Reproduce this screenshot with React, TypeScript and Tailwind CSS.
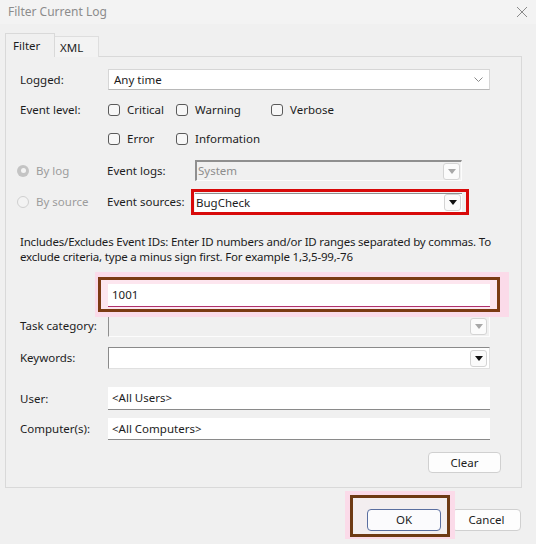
import React from "react";

const font = { fontFamily: '"Noto Sans", "Liberation Sans", sans-serif' };

function Check({ label, className = "" }: { label: string; className?: string }) {
  return (
    <div className={"flex items-center " + className}>
      <div className="w-[12px] h-[12px] rounded-[3px] border border-[#5a5a5a] bg-[#f7f7f7]" />
      <span className="ml-[7px]">{label}</span>
    </div>
  );
}

function Arrow({ color = "#000" }: { color?: string }) {
  return (
    <svg width="8" height="5" viewBox="0 0 8 5">
      <path d="M0 0 L8 0 L4 5 Z" fill={color} />
    </svg>
  );
}

function DropBtn({ dark }: { dark: boolean }) {
  return (
    <div className="w-[17px] h-[17px] rounded-[3px] border border-[#d4d4d4] bg-[#fbfbfb] flex items-center justify-center">
      <Arrow color={dark ? "#111" : "#a8a8a8"} />
    </div>
  );
}

export default function App() {
  return (
    <div
      className="w-[536px] h-[544px] bg-[#f0f0f0] text-[11.5px] text-[#1c1c1c] overflow-hidden relative"
      style={font}
    >
      {/* title bar */}
      <div className="h-[24px] flex items-center justify-between pl-[8px] pr-[7px] bg-[#f3f3f3]">
        <span className="text-[12px] text-[#8c8c8c]">Filter Current Log</span>
        <svg width="12" height="12" viewBox="0 0 12 12" className="mr-[1px]">
          <path d="M1 1 L11 11 M11 1 L1 11" stroke="#8a8a8a" strokeWidth="1" />
        </svg>
      </div>

      {/* tabs */}
      <div className="flex items-end ml-[5px] mt-[9px] h-[24px] relative z-10">
        <div className="w-[50px] h-[24px] border border-[#d9d9d9] border-b-0 bg-[#f0f0f0] pl-[7px] pt-[3px]">
          Filter
        </div>
        <div className="w-[44px] h-[21px] border border-[#dedede] border-l-0 border-b-0 bg-[#f3f3f3] pl-[5px] pt-[2px]">
          XML
        </div>
      </div>

      {/* panel */}
      <div className="ml-[5px] w-[517px] h-[432px] -mt-[1px] border border-[#d9d9d9] bg-[#f0f0f0] relative pl-[14px]">
        {/* Logged */}
        <div className="flex items-center mt-[12px] h-[21px]">
          <span className="w-[88px]">Logged:</span>
          <div className="w-[382px] h-[21px] bg-white border border-[#d6d6d6] border-b-[#b8b8b8] flex items-center justify-between pl-[5px] pr-[6px]">
            <span>Any time</span>
            <svg width="9" height="6" viewBox="0 0 9 6">
              <path d="M0.5 0.5 L4.5 4.5 L8.5 0.5" fill="none" stroke="#8a8a8a" strokeWidth="1" />
            </svg>
          </div>
        </div>

        {/* Event level */}
        <div className="flex items-center mt-[11px] h-[18px]">
          <span className="w-[88px]">Event level:</span>
          <Check label="Critical" className="w-[68px]" />
          <Check label="Warning" className="w-[95px]" />
          <Check label="Verbose" />
        </div>
        <div className="flex items-center mt-[11px] h-[18px]">
          <span className="w-[88px]"></span>
          <Check label="Error" className="w-[68px]" />
          <Check label="Information" />
        </div>

        {/* By log */}
        <div className="flex items-center mt-[12px] h-[21px]">
          <div className="w-[90px] shrink-0 flex items-center -ml-[3px] text-[#9c9c9c]">
            <div className="w-[12px] h-[12px] rounded-full bg-[#c4c4c4] flex items-center justify-center">
              <div className="w-[5px] h-[5px] rounded-full bg-[#f4f4f4]" />
            </div>
            <span className="ml-[7px]">By log</span>
          </div>
          <span className="w-[88px] shrink-0">Event logs:</span>
          <div className="w-[267px] h-[21px] bg-[#f0f0f0] border-t-2 border-l-2 border-t-[#8f8f8f] border-l-[#8f8f8f] border-r border-b border-r-[#fcfcfc] border-b-[#fcfcfc] flex items-center justify-between pl-[1px] pr-[1px] text-[#8d8d8d]">
            <span>System</span>
            <DropBtn dark={false} />
          </div>
        </div>

        {/* By source */}
        <div className="flex items-center mt-[11px] h-[20px]">
          <div className="w-[90px] shrink-0 flex items-center -ml-[3px] text-[#9c9c9c]">
            <div className="w-[12px] h-[12px] rounded-full border border-[#cfcfcf] bg-[#f3f3f3]" />
            <span className="ml-[7px]">By source</span>
          </div>
          <span className="w-[88px] shrink-0">Event sources:</span>
          <div className="relative w-[267px] h-[19px] bg-white border-t border-t-[#8f8f8f] flex items-center justify-between pl-[1px] pr-[1px]">
            <span>BugCheck</span>
            <DropBtn dark={true} />
            <div className="absolute -left-[4px] -top-[5px] w-[278px] h-[26px] border-[3px] border-[#d80a0a]" />
          </div>
        </div>

        {/* description */}
        <div className="mt-[22px] leading-[15px] whitespace-nowrap tracking-[-0.2px]">
          Includes/Excludes Event IDs: Enter ID numbers and/or ID ranges separated by commas. To
          <br />
          exclude criteria, type a minus sign first. For example 1,3,5-99,-76
        </div>

        {/* ID input with annotation */}
        <div className="flex mt-[20px] h-[23px]">
          <span className="w-[88px]"></span>
          <div className="relative w-[382px] h-[23px]">
            <div className="absolute -left-[13px] -top-[12px] w-[414px] h-[45px] bg-[#fbdbe9]" />
            <div className="absolute -left-[10px] -top-[7px] w-[402px] h-[35px] border-[3px] border-[#7b3a12] bg-[#fde6ef]" />
            <div className="absolute inset-0 bg-white border-b border-b-[#b0326d] flex items-center pl-[4px]">
              1001
            </div>
          </div>
        </div>

        {/* Task category */}
        <div className="flex items-center mt-[8px] h-[22px]">
          <span className="w-[88px]">Task category:</span>
          <div className="w-[382px] h-[22px] bg-[#f0f0f0] border-t border-l border-t-[#8f8f8f] border-l-[#8f8f8f] border-r border-b border-r-[#fcfcfc] border-b-[#fcfcfc] flex items-center justify-end pr-[2px]">
            <DropBtn dark={false} />
          </div>
        </div>

        {/* Keywords */}
        <div className="flex items-center mt-[10px] h-[22px]">
          <span className="w-[88px]">Keywords:</span>
          <div className="w-[382px] h-[22px] bg-white border border-t-[#8a8a8a] border-l-[#8a8a8a] border-r-[#e0e0e0] border-b-[#e0e0e0] flex items-center justify-end pr-[2px]">
            <DropBtn dark={true} />
          </div>
        </div>

        {/* User */}
        <div className="flex items-center mt-[18px] h-[23px]">
          <span className="w-[88px]">User:</span>
          <div className="w-[382px] h-[23px] bg-white border-b border-b-[#8a8a8a] flex items-center pl-[4px]">
            &lt;All Users&gt;
          </div>
        </div>

        {/* Computers */}
        <div className="flex items-center mt-[8px] h-[22px]">
          <span className="w-[88px]">Computer(s):</span>
          <div className="w-[382px] h-[22px] bg-white border-b border-b-[#8a8a8a] flex items-center pl-[4px]">
            &lt;All Computers&gt;
          </div>
        </div>

        {/* Clear */}
        <div className="flex justify-end mt-[12px] pr-[20px]">
          <div className="w-[73px] h-[21px] bg-[#fdfdfd] border border-[#d0d0d0] rounded-[4px] flex items-center justify-center">
            Clear
          </div>
        </div>
      </div>

      {/* bottom buttons */}
      <div className="flex justify-end mt-[21px] pr-[15px] gap-[11px]">
        <div className="relative w-[74px] h-[22px]">
          <div className="absolute -left-[22px] -top-[18px] w-[110px] h-[48px] bg-[#fbdbe9]" />
          <div className="absolute -left-[17px] -top-[14px] w-[100px] h-[42px] border-[3px] border-[#6e3a14] bg-[#f3eef0]" />
          <div className="absolute inset-0 bg-[#fbfbfd] border border-[#5a6ea0] rounded-[4px] flex items-center justify-center">
            OK
          </div>
        </div>
        <div className="w-[69px] h-[22px] bg-[#fdfdfd] border border-[#d0d0d0] rounded-[4px] flex items-center justify-center">
          Cancel
        </div>
      </div>
    </div>
  );
}
